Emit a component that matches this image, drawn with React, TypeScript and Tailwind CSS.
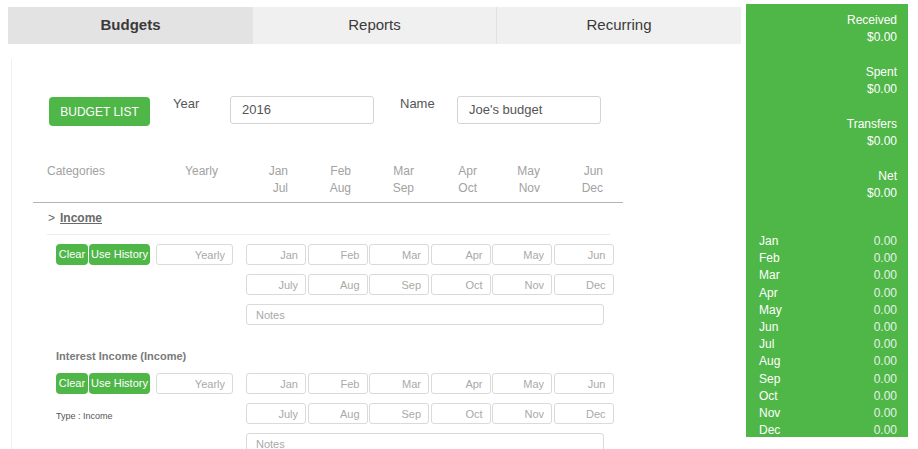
import React from 'react';

const firstHalf = ['Jan', 'Feb', 'Mar', 'Apr', 'May', 'Jun'];
const secondHalf = ['July', 'Aug', 'Sep', 'Oct', 'Nov', 'Dec'];
const headerPairs = [
  ['Jan', 'Jul'],
  ['Feb', 'Aug'],
  ['Mar', 'Sep'],
  ['Apr', 'Oct'],
  ['May', 'Nov'],
  ['Jun', 'Dec'],
];
const summary = [
  { label: 'Received', value: '$0.00' },
  { label: 'Spent', value: '$0.00' },
  { label: 'Transfers', value: '$0.00' },
  { label: 'Net', value: '$0.00' },
];
const months = ['Jan', 'Feb', 'Mar', 'Apr', 'May', 'Jun', 'Jul', 'Aug', 'Sep', 'Oct', 'Nov', 'Dec'];

const Cell: React.FC<{ placeholder: string; className?: string }> = ({ placeholder, className = '' }) => (
  <input
    readOnly
    placeholder={placeholder}
    className={`h-[21px] rounded-[3px] border border-[#dadada] bg-white pr-[7px] text-right text-[11px] outline-none placeholder:text-[#a9a9a9] ${className}`}
  />
);

const MonthRow: React.FC<{ labels: string[] }> = ({ labels }) => (
  <div className="flex gap-[1.5px]">
    {labels.map((m) => (
      <Cell key={m} placeholder={m} className="w-[60px]" />
    ))}
  </div>
);

const Actions: React.FC = () => (
  <div className="flex items-center">
    <button className="h-[21px] w-[32px] rounded-[4px] bg-[#4fb648] text-[11px] text-white">Clear</button>
    <button className="ml-[1px] h-[21px] w-[61px] rounded-[4px] bg-[#4fb648] text-[11px] text-white">Use History</button>
    <Cell placeholder="Yearly" className="ml-[6px] w-[77px]" />
  </div>
);

const CategoryBlock: React.FC<{ title?: string; type?: string }> = ({ title, type }) => (
  <div className="pl-[44px]">
    {title && (
      <div className="mb-[10px] text-[11px] font-bold leading-[14px] text-[#7a7a7a]">{title}</div>
    )}
    <div className="flex">
      <div className="w-[190px]">
        <Actions />
        {type && <div className="pt-[17px] text-[9px] leading-[11px] text-[#555]">{type}</div>}
      </div>
      <div className="flex flex-col gap-[9px]">
        <MonthRow labels={firstHalf} />
        <MonthRow labels={secondHalf} />
        <input
          readOnly
          placeholder="Notes"
          className="h-[21px] w-[358px] rounded-[3px] border border-[#dadada] bg-white pl-[9px] text-[11px] outline-none placeholder:text-[#a9a9a9]"
        />
      </div>
    </div>
  </div>
);

export default function App() {
  return (
    <div className="flex h-[449px] w-[918px] overflow-hidden bg-white font-['Liberation_Sans',Arial,sans-serif]">
      <div className="ml-[8px] mt-[7px] flex w-[733px] flex-col">
        <div className="flex h-[37px] shrink-0 text-[15px] text-[#3a3a3a]">
          <div className="flex w-[245px] items-center justify-center bg-[#e3e3e3] font-bold">Budgets</div>
          <div className="flex w-[244px] items-center justify-center border-r border-[#e2e2e2] bg-[#f0f0f0]">Reports</div>
          <div className="flex w-[244px] items-center justify-center bg-[#f0f0f0]">Recurring</div>
        </div>

        <div className="ml-[3px] mt-[15px] shrink-0 border-l border-[#f1f1f1] pt-[37px]">
          <div className="flex items-start pl-[37px] text-[13px] text-[#555]">
            <button className="mt-[1px] h-[29px] w-[101px] rounded-[4px] bg-[#4fb648] text-[12px] text-white">BUDGET LIST</button>
            <span className="ml-[23px] w-[57px] leading-[16px]">Year</span>
            <div className="flex h-[28px] w-[144px] items-center rounded-[3px] border border-[#d4d4d4] pl-[11px]">2016</div>
            <span className="ml-[26px] w-[57px] leading-[16px]">Name</span>
            <div className="flex h-[28px] w-[144px] items-center rounded-[3px] border border-[#d4d4d4] pl-[11px]">Joe's budget</div>
          </div>

          <div className="mt-[37px] flex pl-[35px] text-[12px] leading-[17px] text-[#a2a2a2]">
            <div className="w-[110px]">Categories</div>
            <div className="w-[61px] text-right">Yearly</div>
            <div className="w-[7px]" />
            {headerPairs.map(([a, b]) => (
              <div key={a} className="w-[63px] text-right">
                <div>{a}</div>
                <div>{b}</div>
              </div>
            ))}
          </div>
          <div className="ml-[21px] mt-[5px] w-[590px] border-t border-[#b4b4b4]" />

          <div className="mt-[7px] flex items-center pl-[36px] text-[12px] font-bold leading-[17px] text-[#6a6a6a]">
            <span className="mr-[5px] font-normal">&gt;</span>
            <span className="underline">Income</span>
          </div>
          <div className="ml-[35px] mt-[7px] w-[563px] border-t border-[#ececec]" />

          <div className="mt-[9px]">
            <CategoryBlock />
          </div>
          <div className="mt-[24px]">
            <CategoryBlock title="Interest Income (Income)" type="Type : Income" />
          </div>
        </div>
      </div>

      <div className="ml-[5px] mt-[4px] h-[433px] w-[162px] shrink-0 bg-[#4fb648] pr-[11px] text-[12px] text-white">
        <div className="flex flex-col gap-[18px] pt-[8px] text-right leading-[17px]">
          {summary.map((s) => (
            <div key={s.label}>
              <div>{s.label}</div>
              <div>{s.value}</div>
            </div>
          ))}
        </div>
        <div className="mt-[31px] pl-[13px] leading-[17.2px]">
          {months.map((m) => (
            <div key={m} className="flex justify-between">
              <span>{m}</span>
              <span className="text-[#e4f3e2]">0.00</span>
            </div>
          ))}
        </div>
      </div>
    </div>
  );
}
